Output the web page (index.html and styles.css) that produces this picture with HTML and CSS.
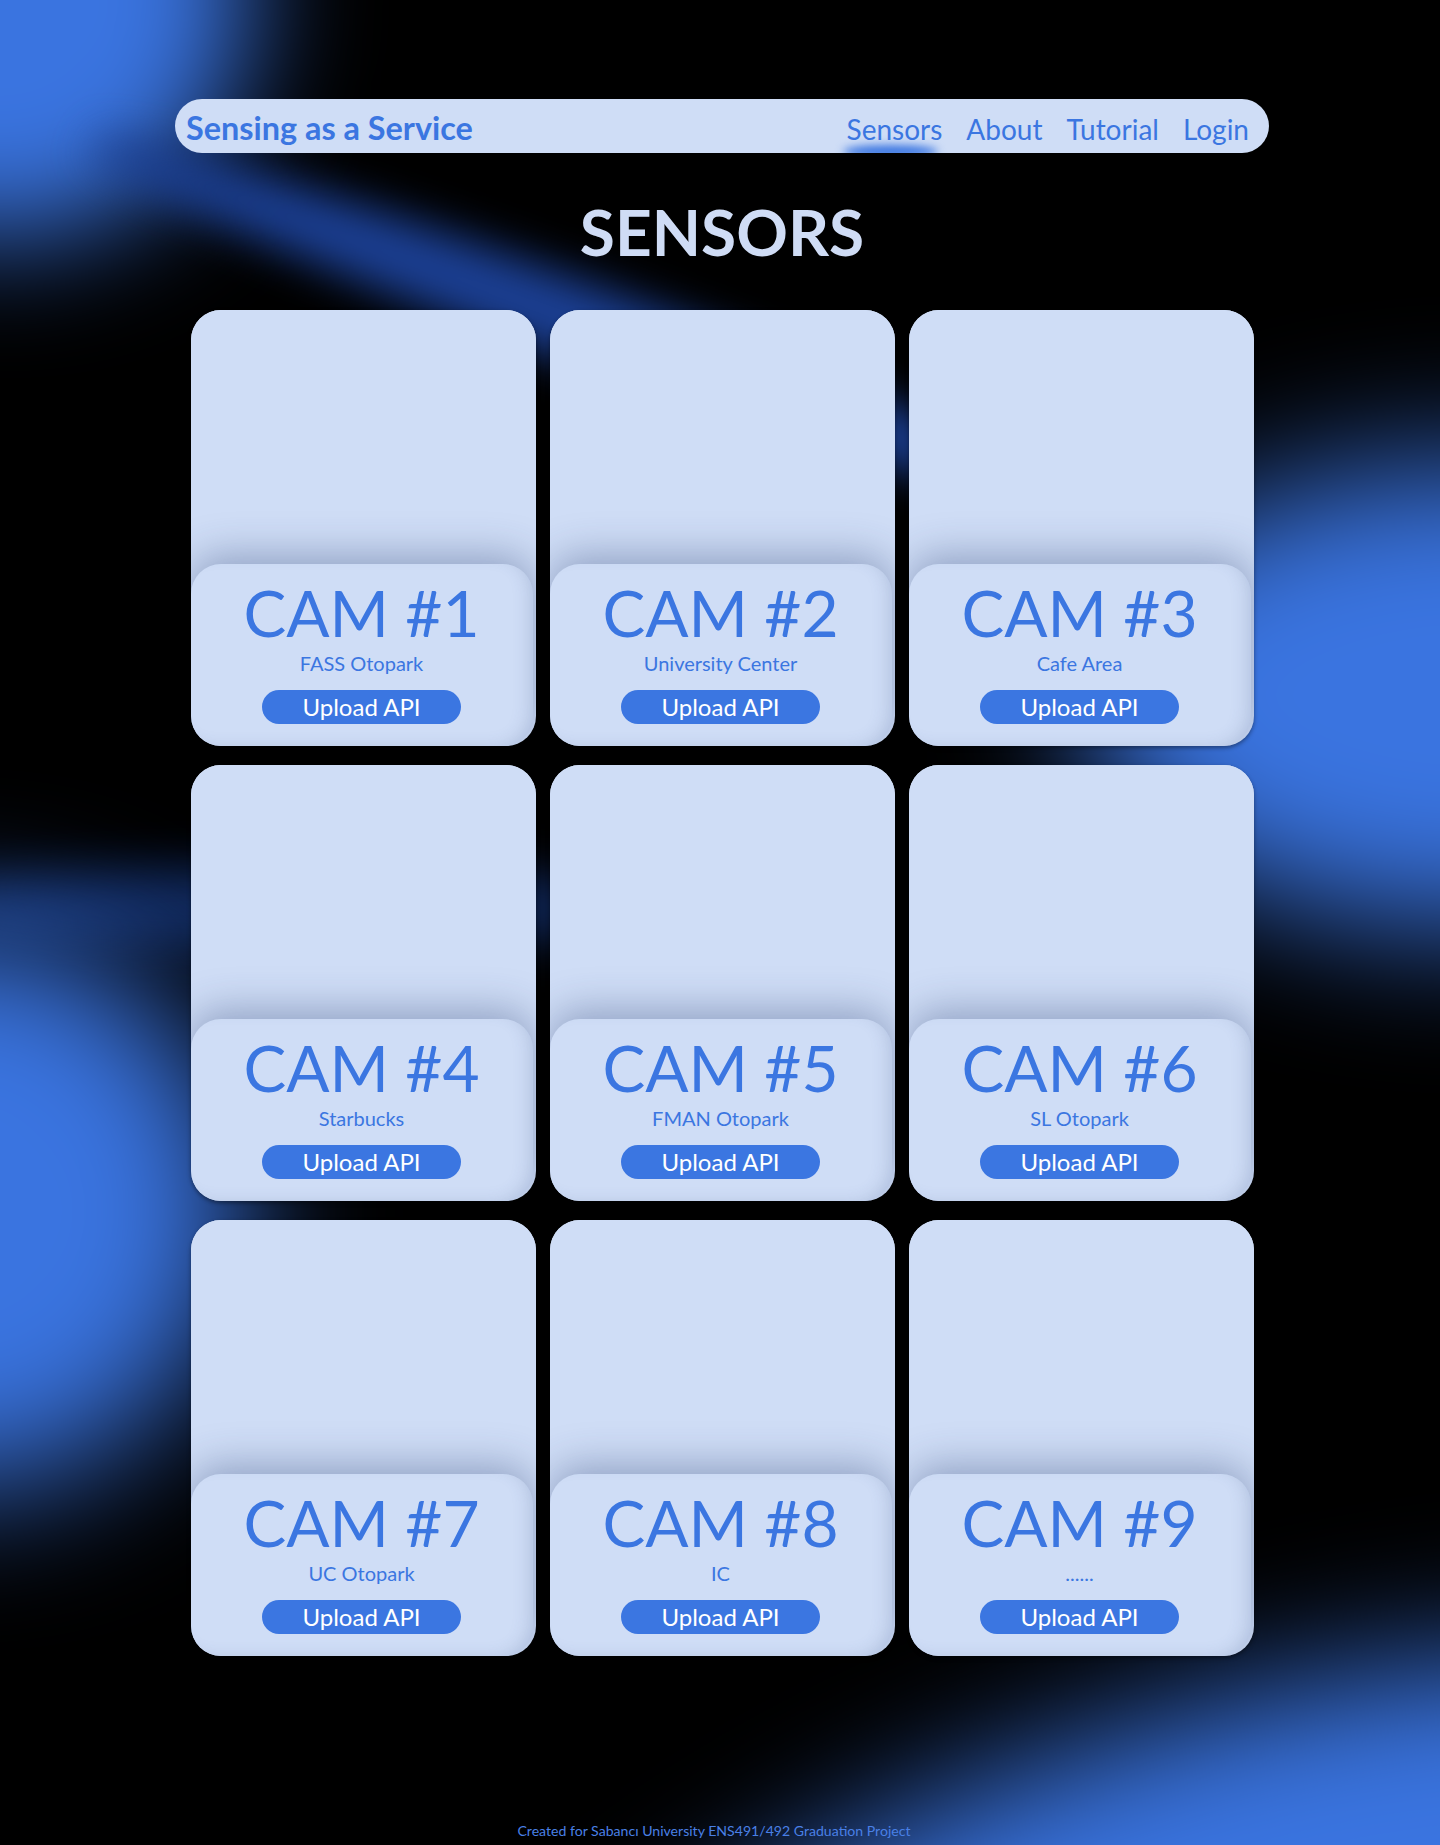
FILE: index.html
```html
<!DOCTYPE html>
<html lang="en">
<head>
<meta charset="utf-8">
<title>Sensing as a Service – Sensors</title>
<link rel="stylesheet" href="styles.css">
</head>
<body>
<div class="screen">
  <div class="bg" aria-hidden="true">
    <span class="blob b-tl"></span>
    <span class="blob b-band"></span>
    <span class="blob b-right"></span>
    <span class="blob b-leftband"></span>
    <span class="blob b-left"></span>
    <span class="blob b-br"></span>
  </div>
  <div class="page">
    <header class="nav">
      <a class="brand" href="#">Sensing as a Service</a>
      <nav class="links">
        <a class="link active" href="#">Sensors</a>
        <a class="link" href="#">About</a>
        <a class="link" href="#">Tutorial</a>
        <a class="link" href="#">Login</a>
      </nav>
    </header>
    <h1 class="title">SENSORS</h1>
    <main class="grid">
      <div class="card"><div class="media"></div><div class="info"><h2>CAM #1</h2><p>FASS Otopark</p><button class="btn">Upload API</button></div></div>
      <div class="card"><div class="media"></div><div class="info"><h2>CAM #2</h2><p>University Center</p><button class="btn">Upload API</button></div></div>
      <div class="card"><div class="media"></div><div class="info"><h2>CAM #3</h2><p>Cafe Area</p><button class="btn">Upload API</button></div></div>
      <div class="card"><div class="media"></div><div class="info"><h2>CAM #4</h2><p>Starbucks</p><button class="btn">Upload API</button></div></div>
      <div class="card"><div class="media"></div><div class="info"><h2>CAM #5</h2><p>FMAN Otopark</p><button class="btn">Upload API</button></div></div>
      <div class="card"><div class="media"></div><div class="info"><h2>CAM #6</h2><p>SL Otopark</p><button class="btn">Upload API</button></div></div>
      <div class="card"><div class="media"></div><div class="info"><h2>CAM #7</h2><p>UC Otopark</p><button class="btn">Upload API</button></div></div>
      <div class="card"><div class="media"></div><div class="info"><h2>CAM #8</h2><p>IC</p><button class="btn">Upload API</button></div></div>
      <div class="card"><div class="media"></div><div class="info"><h2>CAM #9</h2><p>......</p><button class="btn">Upload API</button></div></div>
    </main>
    <footer class="footer">Created for Sabancı University ENS491/492 Graduation Project</footer>
  </div>
</div>
</body>
</html>
```
FILE: styles.css
```css
* { box-sizing: border-box; }

html, body {
  margin: 0;
  padding: 0;
  background: #000;
}

body {
  font-family: Lato, "Open Sans", "Liberation Sans", sans-serif;
  color: #3b76e1;
}

.screen {
  position: relative;
  min-height: 1845px;
  overflow: hidden;
  background: #000;
}

/* decorative blurred background */
.bg {
  position: absolute;
  inset: 0;
  pointer-events: none;
  z-index: 0;
}

.blob {
  position: absolute;
  display: block;
  border-radius: 50%;
  background: #3a74e0;
}

.b-tl {
  left: -250px;
  top: -240px;
  width: 500px;
  height: 480px;
  filter: blur(60px);
}

.b-band {
  left: 60px;
  top: 275px;
  width: 1000px;
  height: 80px;
  background: #1b3f93;
  transform: rotate(20deg);
  filter: blur(22px);
}

.b-right {
  left: 1080px;
  top: 460px;
  width: 800px;
  height: 470px;
  filter: blur(70px);
}

.b-leftband {
  left: -100px;
  top: 868px;
  width: 760px;
  height: 80px;
  background: #0f2658;
  filter: blur(25px);
}

.b-left {
  left: -320px;
  top: 930px;
  width: 560px;
  height: 560px;
  filter: blur(70px);
}

.b-br {
  left: 490px;
  top: 1710px;
  width: 1500px;
  height: 640px;
  transform: rotate(-17deg);
  filter: blur(70px);
}

/* page */
.page {
  position: relative;
  z-index: 1;
  min-height: 1845px;
  display: flex;
  flex-direction: column;
  align-items: center;
  padding: 99px 0 6px 4px;
}

.nav {
  width: 1094px;
  height: 54px;
  border-radius: 27px;
  background: #cfddf6;
  display: flex;
  align-items: center;
  justify-content: space-between;
  padding: 0 20px 0 11px;
  overflow: hidden;
}

.brand {
  margin-top: 4px;
  font-size: 32.4px;
  font-weight: 700;
  color: #3b76e1;
  text-decoration: none;
  line-height: 1.2;
}

.links {
  display: flex;
  gap: 24px;
  margin-top: 8px;
}

.link {
  position: relative;
  font-size: 28px;
  line-height: 1.2;
  color: #3b76e1;
  text-decoration: none;
}

.link.active::after {
  content: "";
  position: absolute;
  left: -4px;
  right: 4px;
  bottom: -11px;
  height: 13px;
  border-radius: 50%;
  background: #3b76e1;
  filter: blur(4px);
}

.title {
  margin: 47px 0 46px;
  font-size: 64px;
  line-height: 64px;
  font-weight: 700;
  color: #cfdcf5;
  text-align: center;
}

.grid {
  display: grid;
  grid-template-columns: repeat(3, 345px);
  column-gap: 14px;
  row-gap: 19px;
}

.card {
  height: 436px;
  border-radius: 30px;
  background: #cfddf6;
  overflow: hidden;
  display: flex;
  flex-direction: column;
  box-shadow: 0 2px 4px rgba(0, 0, 0, 0.4);
}

.media {
  flex: 0 0 254px;
  background: #cfddf6;
}

.info {
  flex: 1;
  margin-right: 3px;
  border-radius: 30px;
  background: #cfddf6;
  box-shadow: 0 -8px 40px rgba(40, 60, 110, 0.38), inset -10px -4px 18px -8px rgba(60, 80, 130, 0.22);
  display: flex;
  flex-direction: column;
  align-items: center;
  padding-top: 17px;
}

.info h2 {
  margin: 0;
  font-size: 64px;
  line-height: 64px;
  font-weight: 400;
  color: #3b76e1;
}

.info p {
  margin: 8px 0 0;
  font-size: 20px;
  line-height: 20px;
  color: #3b76e1;
}

.btn {
  margin-top: 17px;
  width: 199px;
  height: 34px;
  border: 0;
  border-radius: 17px;
  background: #3b76e1;
  color: #fff;
  font-family: Lato, "Open Sans", "Liberation Sans", sans-serif;
  font-size: 24px;
  line-height: 34px;
  padding: 0;
  cursor: pointer;
}

.footer {
  margin-top: auto;
  padding-right: 16px;
  font-size: 14.1px;
  line-height: 17px;
  color: #4a80e6;
  text-align: center;
}
```
